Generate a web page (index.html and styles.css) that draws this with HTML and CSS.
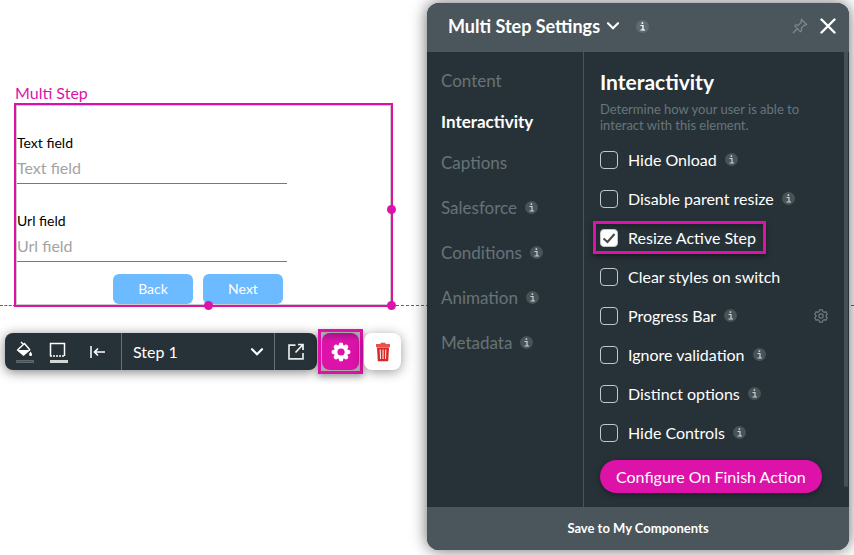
FILE: index.html
```html
<!DOCTYPE html>
<html lang="en">
<head>
<meta charset="utf-8">
<title>Multi Step Settings</title>
<link rel="stylesheet" href="styles.css">
</head>
<body>
<svg width="0" height="0" class="defs" aria-hidden="true">
  <symbol id="chevron" viewBox="0 0 14 10"><path d="M2 2.2l5 5 5-5" fill="none" stroke="currentColor" stroke-width="2.2" stroke-linecap="round"/></symbol>
  <symbol id="info" viewBox="0 0 13 13"><circle cx="6.500" cy="6.500" r="6.500" fill="#485358"/><path d="M4.500 5.500H7V10M4.500 10h4.500" fill="none" stroke="#cdd1d2" stroke-width="1.200"/><path d="M5.600 2.300h1.600v1.600H5.600z" fill="#cdd1d2"/></symbol>
</svg>
<main class="page">
  <section class="canvas">
    <h2 class="component-name">Multi Step</h2>
    <form class="multi-step">
      <div class="field">
        <label for="text-field">Text field</label>
        <input id="text-field" type="text" placeholder="Text field">
      </div>
      <div class="field">
        <label for="url-field">Url field</label>
        <input id="url-field" type="url" placeholder="Url field">
      </div>
      <div class="step-buttons">
        <button type="button">Back</button>
        <button type="button">Next</button>
      </div>
      <span class="handle handle-right"></span>
      <span class="handle handle-bottom"></span>
      <span class="handle handle-corner"></span>
    </form>
    <div class="toolbar-row">
      <div class="toolbar">
        <div class="tools">
          <button type="button" aria-label="Fill"><svg width="20" height="26" viewBox="0 0 20 26"><path d="M6 3l2 2M2.500 11l7-6.500 5.500 6.500" fill="none" stroke="#fff" stroke-width="1.500"/><path d="M1.500 11h14L8.500 17z" fill="#fff"/><path d="M15.500 12.500c1 1.400 1.600 2.200 1.600 3a1.500 1.500 0 0 1-3 0c0-.8.500-1.600 1.400-3z" fill="#fff"/><path d="M1.500 21.500h17v2h-17z" fill="#48535a" stroke="#606b71"/></svg></button>
          <button type="button" aria-label="Border"><svg width="20" height="26" viewBox="0 0 20 26"><path d="M1.500 17V4.500h14V17" fill="none" stroke="#fff" stroke-width="1.500"/><path d="M1 17h15" stroke="#fff" stroke-width="1.500" stroke-dasharray="2 1"/><path d="M1 21h18v3H1z" fill="#d2d7d3"/></svg></button>
          <button type="button" aria-label="Align left"><svg width="18" height="26" viewBox="0 0 18 26"><path d="M2 7v12" stroke="#fff" stroke-width="1.500"/><path d="M16 13H6M9 9.500L5.500 13 9 16.500" fill="none" stroke="#fff" stroke-width="1.600"/></svg></button>
        </div>
        <button type="button" class="step-picker">Step 1 <svg width="14" height="10"><use href="#chevron"/></svg></button>
        <button type="button" class="open" aria-label="Open"><svg width="18" height="20" viewBox="0 0 18 20"><path d="M8.500 3.200H2v13.600h14V11" fill="none" stroke="#e4e6e6" stroke-width="1.700"/><path d="M8.500 10.500L15.500 3M11 2.500h5v5.500" fill="none" stroke="#f4f4f4" stroke-width="1.700"/></svg></button>
      </div>
      <div class="gear-highlight">
        <button type="button" class="gear" aria-label="Settings"><svg width="20" height="20" viewBox="0 0 20 20"><g stroke="#fff" stroke-width="4.600" stroke-linecap="round"><path d="M10 2.800v14.400M2.800 10h14.400M5 5l10 10M15 5L5 15"/></g><circle cx="10" cy="10" r="7" fill="#fff"/><circle cx="10" cy="10" r="3.600" fill="#dd12a9"/></svg></button>
      </div>
      <button type="button" class="trash" aria-label="Delete"><svg width="16" height="20" viewBox="0 0 16 20"><path d="M5.500 2V.7h5V2H15v3.300H1V2z" fill="#e3544f"/><path d="M2 5.500h12l-.8 13.800H2.800z" fill="#dc2626"/><path d="M5.200 7.500l.3 9.500M8 7.500V17M10.800 7.500l-.3 9.500" stroke="#fff" stroke-width="1"/></svg></button>
    </div>
  </section>
  <aside class="panel">
    <header class="panel-header">
      <h1>Multi Step Settings</h1>
      <svg width="14" height="10"><use href="#chevron"/></svg>
      <svg class="info header-info" width="13" height="13"><use href="#info"/></svg>
      <button type="button" class="pin" aria-label="Pin"><svg width="16" height="16" viewBox="0 0 16 16" fill="none" stroke="#7d878b" stroke-width="1.300"><path d="M9.500 1.500l5 5-1.300.8-.8-.2-3 3 .2 2.400-1.200 1.200-5.600-5.600L4 6.900l2.400.2 3-3-.4-1zM5 11l-4 4"/></svg></button>
      <button type="button" class="close" aria-label="Close"><svg width="16" height="16" viewBox="0 0 16 16"><path d="M1.500 1.500l13 13M14.500 1.500l-13 13" stroke="#fff" stroke-width="2.400" stroke-linecap="round"/></svg></button>
    </header>
    <div class="panel-body">
      <nav class="tabs">
        <a href="#content">Content</a>
        <a href="#interactivity" class="active">Interactivity</a>
        <a href="#captions">Captions</a>
        <a href="#salesforce" class="with-info">Salesforce <svg class="info" width="13" height="13"><use href="#info"/></svg></a>
        <a href="#conditions" class="with-info">Conditions <svg class="info" width="13" height="13"><use href="#info"/></svg></a>
        <a href="#animation" class="with-info">Animation <svg class="info" width="13" height="13"><use href="#info"/></svg></a>
        <a href="#metadata" class="with-info">Metadata <svg class="info" width="13" height="13"><use href="#info"/></svg></a>
      </nav>
      <section class="settings">
        <h2>Interactivity</h2>
        <p>Determine how your user is able to interact with this element.</p>
        <div class="options">
          <div class="option"><label><input type="checkbox">Hide Onload</label><svg class="info" width="13" height="13"><use href="#info"/></svg></div>
          <div class="option"><label><input type="checkbox">Disable parent resize</label><svg class="info" width="13" height="13"><use href="#info"/></svg></div>
          <div class="option highlighted"><label><input type="checkbox" checked>Resize Active Step</label></div>
          <div class="option"><label><input type="checkbox">Clear styles on switch</label></div>
          <div class="option"><label><input type="checkbox">Progress Bar</label><svg class="info" width="13" height="13"><use href="#info"/></svg>
            <button type="button" class="option-gear" aria-label="Progress Bar settings"><svg width="14" height="14" viewBox="0 0 14 14" fill="none" stroke="#70797d" stroke-width="1.200"><path d="M5.600.8h2.800l.5 1.800 1.200.7 1.800-.5 1.400 2.400L12 6.500v1l1.300 1.300-1.400 2.400-1.800-.5-1.200.7-.5 1.800H5.600l-.5-1.800-1.200-.7-1.800.5L.7 8.800 2 7.500v-1L.7 5.200l1.400-2.400 1.800.5 1.200-.7z"/><circle cx="7" cy="7" r="2.200"/></svg></button></div>
          <div class="option"><label><input type="checkbox">Ignore validation</label><svg class="info" width="13" height="13"><use href="#info"/></svg></div>
          <div class="option"><label><input type="checkbox">Distinct options</label><svg class="info" width="13" height="13"><use href="#info"/></svg></div>
          <div class="option"><label><input type="checkbox">Hide Controls</label><svg class="info" width="13" height="13"><use href="#info"/></svg></div>
        </div>
        <button type="button" class="primary">Configure On Finish Action</button>
      </section>
      <span class="scroll-thumb"></span>
    </div>
    <button type="button" class="save">Save to My Components</button>
  </aside>
</main>
</body>
</html>
```
FILE: styles.css
```css
* { box-sizing: border-box; }
body { margin: 0; background: #fff; font-family: Lato, "Liberation Sans", sans-serif; font-size: 16px; }
h1, h2, p { margin: 0; }
button { border: 0; padding: 0; background: none; color: inherit; font: inherit; }
svg { display: block; flex: none; }
.defs { position: absolute; }
.page { display: flex; align-items: flex-start; gap: 26px; padding: 3px 5px 5px; }
.canvas { flex: 1; padding-top: 80px; }

.component-name { margin-left: 10px; color: #dd12a9; font-size: 16px; line-height: 20px; font-weight: 400; }
.multi-step { position: relative; margin: 0 8px 26px 9px; padding: 27px 1px 1px; border: 2px solid #dd12a9; box-shadow: inset 0 0 0 1px #ccc; }
/* Guide lines that run on from the bottom edge to both sides of the page */
.multi-step::before, .multi-step::after { content: ""; position: absolute; bottom: -1px; border-top: 1px dashed #c02b9c; }
.multi-step::before { right: 100%; width: 16px; }
.multi-step::after { left: 100%; width: 463px; }
.field { width: 270px; margin-bottom: 26px; }
.field + .field { margin-bottom: 12px; }
.field label { display: block; color: #000; font-size: 14px; line-height: 22px; }
.field input { display: block; width: 100%; height: 30px; padding: 0 0 2px; border: 0; border-bottom: 1px solid #2b8ae6; background: none; font: 16px Lato, "Liberation Sans", sans-serif; outline: 0; }
.field input::placeholder { color: #a3a3a3; opacity: 1; }
.step-buttons { display: flex; justify-content: flex-end; gap: 10px; width: 266px; }
.step-buttons button { width: 80px; height: 30px; padding-bottom: 2px; border-radius: 6px; background: #6cbaff; color: #fff; font-size: 14px; }
.handle { position: absolute; width: 9px; height: 9px; border-radius: 50%; background: #dd12a9; z-index: 1; }
.handle-right { right: -5px; top: 50%; }
.handle-bottom { left: 50%; bottom: -5px; }
.handle-corner { right: -5px; bottom: -5px; }

.toolbar-row { display: flex; align-items: center; margin-top: -4px; }
.toolbar { display: flex; flex: 1; height: 37px; border-radius: 8px; background: #273238; color: #fff; box-shadow: 0 2px 12px rgba(0,0,0,.5); }
.tools { display: flex; align-items: center; gap: 14px; width: 117px; padding-left: 10px; border-right: 1px solid #657076; }
.tools button:last-child { margin-left: 6px; }
.step-picker { display: flex; flex: 1; align-items: center; justify-content: space-between; padding: 0 10px 0 11px; }
.open { display: flex; align-items: center; justify-content: center; width: 43px; border-left: 1px solid #657076; }
.gear-highlight { margin: 0 1px; border: 3px solid #dd12a9; padding: 1px; background: #aaa; box-shadow: 0 3px 7px rgba(0,0,0,.4); }
.gear, .trash { display: flex; align-items: center; justify-content: center; width: 37px; height: 37px; border-radius: 8px; }
.gear { background: linear-gradient(#a5158b, #dd12a9 8px); }
.trash { background: #fff; box-shadow: 0 2px 12px rgba(0,0,0,.4); }

.panel { position: relative; z-index: 2; display: flex; flex-direction: column; width: 422px; border-radius: 12px; background: #273238; color: #fff; overflow: hidden; box-shadow: 0 0 16px rgba(0,0,0,.6); }
.panel-header { display: flex; align-items: center; height: 49px; padding: 0 13px 3px 21px; background: #4a565b; }
.panel-header h1 { margin-right: 6px; font-size: 18px; line-height: 24px; font-weight: 700; }
.header-info { margin-left: 16px; filter: brightness(1.3); }
.pin { margin-left: auto; margin-right: 12px; }
.panel-body { position: relative; display: flex; height: 455px; }
.tabs { display: flex; flex-direction: column; width: 157px; padding: 8px 0 0 14px; border-right: 1px solid #4a565b; }
.tabs { flex: none; }
.tabs a { display: flex; align-items: center; gap: 8px; height: 41px; color: #687277; font-size: 17px; text-decoration: none; }
.tabs .with-info { margin-top: 4px; }
.tabs .active { color: #fff; font-size: 17px; font-weight: 700; }
.settings { flex: 1; padding: 18px 26px 0 16px; }
.settings h2 { font-size: 21px; line-height: 24px; }
.settings p { margin: 7px 0; color: #68757b; font-size: 13px; line-height: 16px; }
.option { display: flex; align-items: center; gap: 8px; height: 39px; }
.option label { display: flex; align-items: center; gap: 10px; }
.option input { appearance: none; width: 18px; height: 18px; margin: 0; border: 1px solid #c3c7c8; border-radius: 4px; }
.option input:checked { background: #fff url("data:image/svg+xml,%3Csvg xmlns='http://www.w3.org/2000/svg' viewBox='0 0 16 16'%3E%3Cpath d='M2.500 8.500l4 3.500 7-8' fill='none' stroke='%23414d52' stroke-width='2'/%3E%3C/svg%3E") center / 16px no-repeat; }
.highlighted { width: fit-content; height: 33px; margin: 3px 0 3px -7px; padding: 0 7px 0 4px; border: 3px solid #dd12a9; box-shadow: 0 3px 6px rgba(0,0,0,.4), inset 0 3px 6px rgba(0,0,0,.3); }
.option-gear { margin-left: auto; margin-right: -5px; }
.primary { display: block; height: 33px; margin-top: 8px; padding: 0 16px; border-radius: 17px; background: #dd12a9; box-shadow: 0 2px 6px rgba(0,0,0,.4); font-size: 16px; white-space: nowrap; }
.scroll-thumb { position: absolute; top: 0; right: 1px; width: 4px; height: 435px; border-radius: 0 0 2px 2px; background: #465157; }
.save { height: 43px; padding-bottom: 2px; background: #4a565b; font-size: 13px; font-weight: 700; }
```
